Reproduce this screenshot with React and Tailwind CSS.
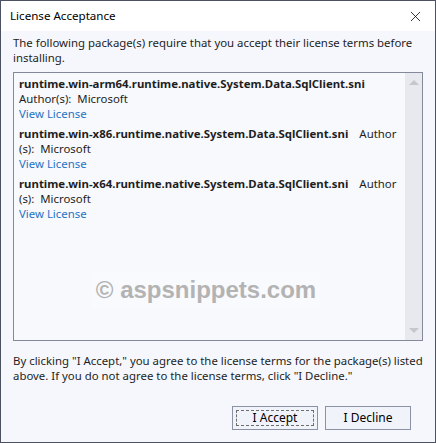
import { X } from "lucide-react";

const packages = [
  { name: "runtime.win-arm64.runtime.native.System.Data.SqlClient.sni", split: false },
  { name: "runtime.win-x86.runtime.native.System.Data.SqlClient.sni", split: true },
  { name: "runtime.win-x64.runtime.native.System.Data.SqlClient.sni", split: true },
];

const PackageItem = ({ name, split }) => (
  <div className="mb-[5px] leading-[15px]">
    {split ? (
      <>
        <div className="whitespace-nowrap">
          <span className="font-bold">{name}</span>
          <span className="ml-[11px]">Author</span>
        </div>
        <div>(s):&nbsp; Microsoft</div>
      </>
    ) : (
      <>
        <div className="font-bold whitespace-nowrap">{name}</div>
        <div>Author(s):&nbsp; Microsoft</div>
      </>
    )}
    <div className="text-[#1f73c4]">View License</div>
  </div>
);

const App = () => {
  return (
    <div
      className="w-[436px] h-[443px] border border-[#4b5261] bg-[#f5f7fc] flex flex-col text-[11.4px] text-[#1e1e1e]"
      style={{ fontFamily: '"Noto Sans", "Open Sans", sans-serif' }}
    >
      {/* title bar */}
      <div className="h-[30px] bg-white flex items-center justify-between pl-[9px] pr-[11px] shrink-0">
        <span className="text-[11.6px] text-black">License Acceptance</span>
        <X size={17} strokeWidth={1.1} className="text-black" />
      </div>

      <div className="flex-1 flex flex-col px-[12px] pt-[4px]">
        <p className="leading-[15px]">
          The following package(s) require that you accept their license terms before installing.
        </p>

        {/* package list */}
        <div className="mt-[7px] h-[269px] border border-[#828a99] bg-[#f7f9fd] flex">
          <div className="flex-1 flex flex-col pl-[5px] pt-[3px]">
            {packages.map((p) => (
              <PackageItem key={p.name} name={p.name} split={p.split} />
            ))}
            <div className="flex-1 flex items-center justify-center pt-[14px] pr-[12px]">
              <span
                className="font-bold text-[24px] text-[#b3b3b3] bg-[#f9fafd] px-1"
                style={{ fontFamily: '"Liberation Sans", Arial, sans-serif' }}
              >
                © aspsnippets.com
              </span>
            </div>
          </div>
          <div className="w-[17px] bg-[#e8e9ee] flex flex-col items-center justify-between py-[6px]">
            <svg width="10" height="6" viewBox="0 0 10 6">
              <path d="M0 6 L5 1 L10 6 Z" fill="#c5c7cc" />
            </svg>
            <svg width="10" height="6" viewBox="0 0 10 6">
              <path d="M0 0 L5 5 L10 0 Z" fill="#c5c7cc" />
            </svg>
          </div>
        </div>

        <p className="mt-[12px] leading-[15px]">
          By clicking "I Accept," you agree to the license terms for the package(s) listed above. If you do not agree to the license terms, click "I Decline."
        </p>

        <div className="mt-auto mb-[12px] flex justify-end gap-[7px] pr-[12px]">
          <button className="w-[86px] h-[24px] border border-[#8a92a3] bg-[#f0f3fa] p-[3px] text-[12px] text-black">
            <div className="h-full border border-dashed border-[#6e6e6e] flex items-center justify-center leading-none">
              I Accept
            </div>
          </button>
          <button className="w-[86px] h-[24px] border border-[#8a92a3] bg-[#f0f3fa] text-[12px] text-black leading-none">
            I Decline
          </button>
        </div>
      </div>
    </div>
  );
};

export default App;
